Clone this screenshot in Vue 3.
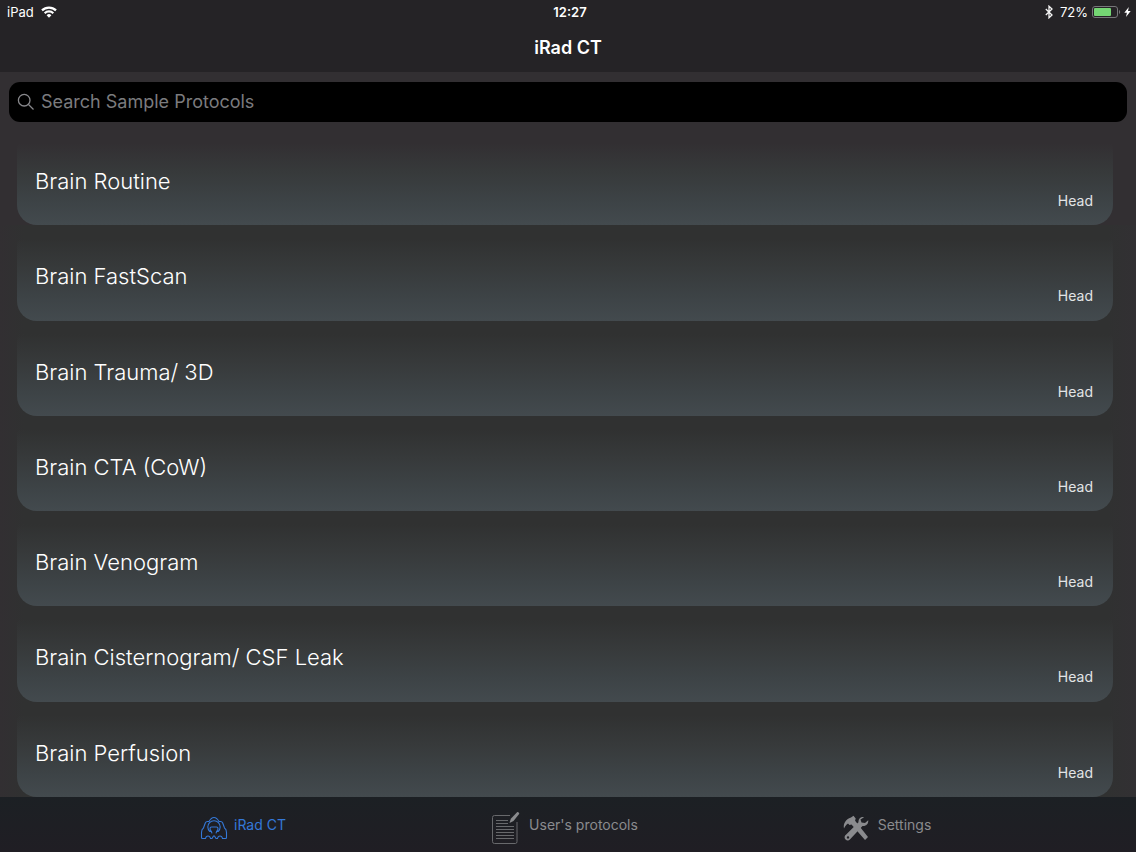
<script setup>
import { ref } from 'vue'

const query = ref('')
const active = ref('iRad CT')
const protocols = [
  { name: 'Brain Routine', region: 'Head' },
  { name: 'Brain FastScan', region: 'Head' },
  { name: 'Brain Trauma/ 3D', region: 'Head' },
  { name: 'Brain CTA (CoW)', region: 'Head' },
  { name: 'Brain Venogram', region: 'Head' },
  { name: 'Brain Cisternogram/ CSF Leak', region: 'Head' },
  { name: 'Brain Perfusion', region: 'Head' },
]
</script>

<template>
  <div class="app">
    <header class="header">
      <div class="status">
        <div class="status-side">
          <span>iPad</span>
          <svg class="wifi" viewBox="0 0 16 12" width="16" height="12" fill="none" stroke="#fff" stroke-width="2.2">
            <path d="M1 4.400a10 10 0 0 1 14 0" />
            <path d="M3.700 7.200a6.100 6.100 0 0 1 8.600 0" />
            <path d="M8 11.800L5.600 9.300a3.400 3.400 0 0 1 4.800 0z" fill="#fff" stroke="none" />
          </svg>
        </div>
        <time class="clock">12:27</time>
        <div class="status-side end">
          <svg viewBox="0 0 8 14" width="8" height="14" fill="none" stroke="#f4f4f4" stroke-width="1.3">
            <path d="M0.800 4l6.200 6L4 12.800V1.200L7 4l-6.200 6" />
          </svg>
          <span class="percent">72%</span>
          <svg viewBox="0 0 29 12" width="29" height="12">
            <rect x="0.5" y="0.5" width="25" height="11" rx="2.5" fill="none" stroke="#77777a" />
            <rect x="2" y="2" width="17" height="8" rx="1" fill="#74d673" />
            <path d="M27 4v4c1.600-.6 1.600-3.400 0-4z" fill="#77777a" />
          </svg>
          <svg class="bolt" viewBox="0 0 7 12" width="7" height="12">
            <path d="M4.800 1L0.300 6.700h2.600L2 11l4.700-6H4z" fill="#fff" />
          </svg>
        </div>
      </div>
      <h1>iRad CT</h1>
    </header>

    <main class="main">
      <label class="search">
        <svg viewBox="0 0 18 18" width="18" height="18" fill="none" stroke="#88888c" stroke-width="1.3">
          <circle cx="7.2" cy="7.2" r="5.8" />
          <path d="M11.500 11.500l5 5" />
        </svg>
        <input v-model="query" type="search" aria-label="Search Sample Protocols" placeholder="Search Sample Protocols" />
      </label>

      <ul class="list">
        <li v-for="p in protocols" :key="p.name" class="row">
          <button type="button" class="card">
            <span class="name">{{ p.name }}</span>
            <span class="region">{{ p.region }}</span>
          </button>
        </li>
      </ul>
    </main>

    <nav class="tabs">
      <button type="button" class="tab" :class="{ active: active === 'iRad CT' }" @click="active = 'iRad CT'">
        <svg class="scanner" viewBox="0 0 28 24" width="28" height="24" fill="none" stroke="currentColor" stroke-width="1.1">
          <path d="M5.500 22.500H2.500q-1 0-1-1v-5c0-2 .5-3.500 2-4.500l1.800-5c.4-1 1.200-1.500 2.200-1.500h1.500C10.500 2.800 12 1.500 14 1.500s3.500 1.300 5 4h1.500c1 0 1.800.5 2.200 1.500l1.800 5c1.500 1 2 2.500 2 4.500v5q0 1-1 1h-3q-.5-2.500-2.500-2.500t-2.500 2.500h-1.500L14.500 20h-1L12 22.500h-1.500Q10 20 8 20t-2.500 2.500z" />
          <path d="M12 17.300l-.6-1.800H9.800a6.200 6.200 0 1 1 8.400 0h-1.600l-.6 1.800" />
          <path d="M10 12.500q0-1.500 1.500-1.500h5q1.500 0 1.500 1.500M10 12.500q0 1.800 1.500 3M18 12.500q0 1.800-1.500 3" />
        </svg>
        <span>iRad CT</span>
      </button>
      <button type="button" class="tab" :class="{ active: active === 'protocols' }" @click="active = 'protocols'">
        <svg class="note" viewBox="0 0 28 34" width="28" height="34" fill="none" stroke="currentColor">
          <g stroke="#68696c">
            <path d="M18 4.500H2.500Q.5 4.500.5 6.500v24q0 2 2 2h21q1.500 0 1.500-2V11" />
            <path d="M4 9.500h12M4 12.500h12M4 15.500h18M4 18.500h18M4 21.500h18M4 24.500h18M4 27.500h18" />
          </g>
          <path d="M17.500 12l1.300-4.200L25.300 1q1.700-.2 2 1.800L21.500 10z" fill="currentColor" stroke="none" />
        </svg>
        <span>User's protocols</span>
      </button>
      <button type="button" class="tab" :class="{ active: active === 'settings' }" @click="active = 'settings'">
        <svg class="tools" viewBox="0 0 26 26" width="26" height="26" fill="currentColor">
          <path d="M1 13.500C0 9 2.500 4 8 2.500L10.500.8l2.200 2.800-.6 2.200L25 22l-3 3L8.500 9.500 6.500 10 5 8.500C3 10 2 11 1 13.500z" />
          <path d="M17.500 4.500L21 2.200c-3-.8-6 1.600-5.500 5L3.200 19.500a3.200 3.200 0 1 0 4.400 4.300L19.500 11c3.500.5 6.200-2 5.700-5.800L22 8l-3.500-.5zM5 21.200a1.200 1.200 0 1 1 0 2.400 1.200 1.200 0 0 1 0-2.400z" fill-rule="evenodd" />
        </svg>
        <span>Settings</span>
      </button>
    </nav>
  </div>
</template>

<style>
body {
  margin: 0;
  background: #322f32;
}
</style>

<style scoped>
.app {
  display: flex;
  flex-direction: column;
  min-height: 100vh;
  font-family: Inter, Roboto, sans-serif;
  color: #fff;
  background: #322f32;
}
button {
  border: 0;
  margin: 0;
  padding: 0;
  background: none;
  color: inherit;
  font: inherit;
}
svg {
  flex: none;
  display: block;
}
.header {
  height: 72px;
  background: #252326;
}
.status {
  display: grid;
  grid-template-columns: 1fr auto 1fr;
  align-items: center;
  height: 24px;
  padding: 0 5px 0 7px;
  font-size: 13px;
}
.status-side {
  display: flex;
  align-items: center;
  gap: 7px;
}
.end {
  justify-content: flex-end;
  gap: 4px;
}
.percent {
  margin-left: 3px;
}
.bolt {
  margin-left: -1px;
}
.clock {
  font-weight: 600;
  padding-left: 2px;
}
h1 {
  margin: 0;
  font-size: 18px;
  line-height: 48px;
  font-weight: 600;
  text-align: center;
}
.main {
  flex: 1;
  display: flex;
  flex-direction: column;
}
.search {
  display: flex;
  align-items: center;
  gap: 6px;
  height: 40px;
  margin: 10px 9px 8px;
  padding: 0 8px;
  border-radius: 11px;
  background: #000;
}
.search input {
  flex: 1;
  min-width: 0;
  padding: 0 0 2px;
  border: 0;
  outline: 0;
  background: none;
  color: #fff;
  font: 18px Inter, Roboto, sans-serif;
  appearance: none;
}
.search input::placeholder {
  color: #7b7b7e;
  opacity: 1;
}
.list {
  flex: 1;
  display: grid;
  grid-auto-rows: 1fr;
  margin: 0;
  padding: 0;
  list-style: none;
}
.row {
  display: flex;
  min-height: 95px;
  padding: 0 23px 0 17px;
  background: linear-gradient(90deg, #322f32, #303131 24px, #303131 calc(100% - 28px), #323033);
}
.row:first-child {
  background: none;
}
.card {
  flex: 1;
  display: flex;
  justify-content: space-between;
  padding: 36px 20px 0 18px;
  border-radius: 20px;
  background: linear-gradient(#33343400 14%, #373a3b 45%, #3d4346 75%, #434a4e);
  text-align: left;
}
.name {
  font-size: 22px;
  line-height: 30px;
  font-weight: 300;
}
.region {
  padding-top: 26px;
  font-size: 14px;
  line-height: 18px;
  color: #e2e4e5;
}
.tabs {
  display: grid;
  grid-template-columns: repeat(3, 1fr);
  height: 55px;
  padding: 0 88px 0 82px;
  background: linear-gradient(#1c2024, #201e24);
  color: #8a8b8e;
  font-size: 14px;
}
.tab {
  display: flex;
  align-items: center;
  justify-content: center;
  gap: 9px;
}
.tab svg {
  margin-top: 6px;
}
.tab span {
  line-height: 18px;
}
.tab.active {
  color: #3478d8;
}
.tab.active svg {
  margin-right: -3px;
}
</style>
